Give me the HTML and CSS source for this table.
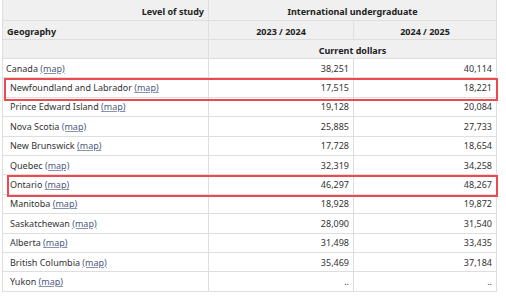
FILE: index.html
```html
<!DOCTYPE html>
<html lang="en">
<head>
    <meta charset="UTF-8">
    <meta name="viewport" content="width=device-width, initial-scale=1.0">
    <title>Tuition fees</title>
    <link rel="stylesheet" href="styles.css">
</head>
<body>

<div class="table-wrap">
    <table class="fees">
        <colgroup>
            <col class="col-geo">
            <col class="col-year">
            <col class="col-year2">
        </colgroup>
        <thead>
            <tr class="h1">
                <th class="right">Level of study</th>
                <th colspan="2">International undergraduate</th>
            </tr>
            <tr class="h2">
                <th class="left">Geography</th>
                <th>2023 / 2024</th>
                <th>2024 / 2025</th>
            </tr>
            <tr class="h3">
                <th></th>
                <th colspan="2">Current dollars</th>
            </tr>
        </thead>
        <tbody>
            <tr class="total"><td>Canada <a href="#">(map)</a></td><td>38,251</td><td>40,114</td></tr>
            <tr><td>Newfoundland and Labrador <a href="#">(map)</a></td><td>17,515</td><td>18,221</td></tr>
            <tr><td>Prince Edward Island <a href="#">(map)</a></td><td>19,128</td><td>20,084</td></tr>
            <tr><td>Nova Scotia <a href="#">(map)</a></td><td>25,885</td><td>27,733</td></tr>
            <tr><td>New Brunswick <a href="#">(map)</a></td><td>17,728</td><td>18,654</td></tr>
            <tr><td>Quebec <a href="#">(map)</a></td><td>32,319</td><td>34,258</td></tr>
            <tr><td>Ontario <a href="#">(map)</a></td><td>46,297</td><td>48,267</td></tr>
            <tr><td>Manitoba <a href="#">(map)</a></td><td>18,928</td><td>19,872</td></tr>
            <tr><td>Saskatchewan <a href="#">(map)</a></td><td>28,090</td><td>31,540</td></tr>
            <tr><td>Alberta <a href="#">(map)</a></td><td>31,498</td><td>33,435</td></tr>
            <tr><td>British Columbia <a href="#">(map)</a></td><td>35,469</td><td>37,184</td></tr>
            <tr><td>Yukon <a href="#">(map)</a></td><td>..</td><td>..</td></tr>
        </tbody>
    </table>

    <!-- highlight boxes drawn over the rows -->
    <div class="mark mark-nl"></div>
    <div class="mark mark-on"></div>
</div>

</body>
</html>
```

FILE: styles.css
```css
body {
    margin: 0;
    background: #fff;
    font-family: 'Noto Sans', 'Open Sans', sans-serif;
    color: #333;
}
.table-wrap {
    position: relative;
    width: 506px;
    height: 296px;
    overflow: hidden;
}
.fees {
    margin-left: 2px;
    width: 494px;
    border-collapse: collapse;
    table-layout: fixed;
    font-size: 9px;
}
.col-geo { width: 206px; }
.col-year { width: 145px; }
.col-year2 { width: 143px; }
.fees th,
.fees td {
    border: 1px solid #dedede;
    padding: 0 4px;
    white-space: nowrap;
    overflow: hidden;
}
.fees th {
    background: #f0f0f0;
    color: #222;
    font-weight: bold;
    text-align: center;
}
.fees th.left { text-align: left; }
.fees th.right { text-align: right; }
.fees tr.h1 th {
    height: 17px;
    padding-top: 3px;
    border-top: none;
}
.fees tr.h2 th,
.fees tr.h3 th {
    height: 16px;
    padding-top: 2px;
}
.fees td {
    height: 18.4px;
    text-align: right;
}
.fees td:first-child {
    text-align: left;
    padding-left: 7px;
}
.fees tr.total td:first-child {
    padding-left: 3px;
}
.fees a {
    color: #4d5a80;
    text-decoration: underline;
    text-decoration-color: #8a93ae;
}
.mark {
    position: absolute;
    border: 2px solid #ec4a50;
    box-sizing: border-box;
}
.mark-nl {
    left: 4px;
    top: 78px;
    width: 494px;
    height: 23px;
}
.mark-on {
    left: 7px;
    top: 175px;
    width: 491px;
    height: 22px;
}
```
